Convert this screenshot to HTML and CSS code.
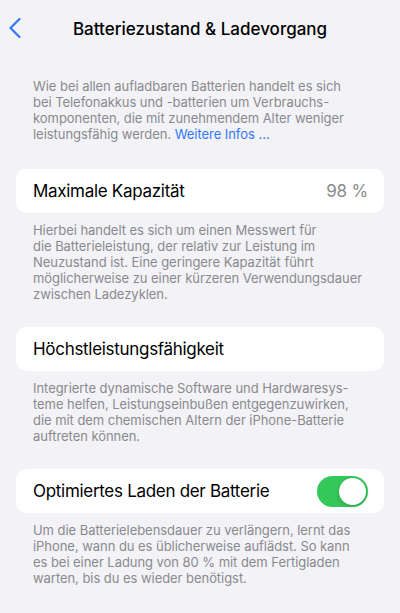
FILE: index.html
```html
<!DOCTYPE html>
<html lang="de">
<head>
<meta charset="utf-8">
<title>Batteriezustand &amp; Ladevorgang</title>
<link rel="stylesheet" href="styles.css">
</head>
<body>
<div class="screen">
  <header class="navbar">
    <svg class="back" width="14" height="22" viewBox="0 0 14 22" aria-hidden="true">
      <path d="M11.5 2 L2.5 11 L11.5 20" fill="none" stroke="#3478f6" stroke-width="2.2" stroke-linecap="round" stroke-linejoin="round"/>
    </svg>
    <h1 class="title">Batteriezustand &amp; Ladevorgang</h1>
  </header>

  <p class="note intro">Wie bei allen aufladbaren Batterien handelt es sich<br>bei Telefonakkus und -batterien um Verbrauchs-<br>komponenten, die mit zunehmendem Alter weniger<br>leistungsfähig werden. <span class="link">Weitere Infos …</span></p>

  <div class="card">
    <span class="label">Maximale Kapazität</span>
    <span class="value">98 %</span>
  </div>
  <p class="note">Hierbei handelt es sich um einen Messwert für<br>die Batterieleistung, der relativ zur Leistung im<br>Neuzustand ist. Eine geringere Kapazität führt<br>möglicherweise zu einer kürzeren Verwendungsdauer<br>zwischen Ladezyklen.</p>

  <div class="card">
    <span class="label">Höchstleistungsfähigkeit</span>
  </div>
  <p class="note">Integrierte dynamische Software und Hardwaresys-<br>teme helfen, Leistungseinbußen entgegenzuwirken,<br>die mit dem chemischen Altern der iPhone-Batterie<br>auftreten können.</p>

  <div class="card">
    <span class="label">Optimiertes Laden der Batterie</span>
    <span class="toggle"><span class="knob"></span></span>
  </div>
  <p class="note">Um die Batterielebensdauer zu verlängern, lernt das<br>iPhone, wann du es üblicherweise auflädst. So kann<br>es bei einer Ladung von 80 % mit dem Fertigladen<br>warten, bis du es wieder benötigst.</p>
</div>
</body>
</html>
```

FILE: styles.css
```css
* { box-sizing: border-box; }
html, body {
  margin: 0;
  padding: 0;
  background: #f2f2f7;
}
body {
  font-family: Inter, "Noto Sans", "Liberation Sans", sans-serif;
  color: #000;
  -webkit-font-smoothing: antialiased;
}
.screen {
  width: 400px;
  height: 613px;
  overflow: hidden;
  display: flex;
  flex-direction: column;
}
.navbar {
  position: relative;
  height: 58px;
  display: flex;
  align-items: center;
  justify-content: center;
}
.back {
  position: absolute;
  left: 8px;
  top: 17px;
}
.title {
  margin: 0;
  font-size: 17px;
  font-weight: 500;
  letter-spacing: 0;
}
.note {
  margin: 9px 0 25px;
  padding: 0 33px;
  font-size: 13px;
  line-height: 16px;
  color: #8a8a8e;
  letter-spacing: -0.05px;
  white-space: nowrap;
}
.note.intro {
  margin: 20px 0 27px;
}
.link {
  color: #3478f6;
}
.card {
  margin: 0 16px;
  height: 44px;
  background: #fff;
  border-radius: 10px;
  padding: 0 16px 0 17px;
  display: flex;
  align-items: center;
  justify-content: space-between;
}
.label {
  font-size: 17px;
  letter-spacing: -0.3px;
}
.value {
  font-size: 17px;
  color: #8a8a8e;
  letter-spacing: -0.2px;
}
.toggle {
  width: 51px;
  height: 31px;
  border-radius: 16px;
  background: #34c759;
  position: relative;
  flex: none;
}
.knob {
  position: absolute;
  top: 2px;
  right: 2px;
  width: 27px;
  height: 27px;
  border-radius: 50%;
  background: #fff;
  box-shadow: 0 2px 4px rgba(0,0,0,0.15), 0 0 1px rgba(0,0,0,0.1);
}
```
